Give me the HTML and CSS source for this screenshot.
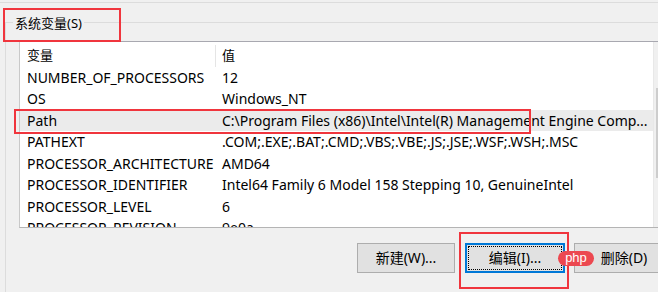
FILE: index.html
```html
<!DOCTYPE html>
<html lang="zh-CN">
<head>
    <meta charset="UTF-8">
    <title>环境变量</title>
    <link rel="stylesheet" href="styles.css">
</head>
<body>
    <div class="shot">
        <div class="prev-edge"></div>
        <div class="group">
            <div class="group-title">系统变量(S)</div>
            <div class="list">
                <div class="rows">
                    <div class="row head"><span class="name">变量</span><span class="value">值</span></div>
                    <div class="row"><span class="name">NUMBER_OF_PROCESSORS</span><span class="value">12</span></div>
                    <div class="row"><span class="name">OS</span><span class="value">Windows_NT</span></div>
                    <div class="row selected"><span class="name">Path</span><span class="value">C:\Program Files (x86)\Intel\Intel(R) Management Engine Comp...</span></div>
                    <div class="row"><span class="name">PATHEXT</span><span class="value">.COM;.EXE;.BAT;.CMD;.VBS;.VBE;.JS;.JSE;.WSF;.WSH;.MSC</span></div>
                    <div class="row"><span class="name">PROCESSOR_ARCHITECTURE</span><span class="value">AMD64</span></div>
                    <div class="row"><span class="name">PROCESSOR_IDENTIFIER</span><span class="value">Intel64 Family 6 Model 158 Stepping 10, GenuineIntel</span></div>
                    <div class="row"><span class="name">PROCESSOR_LEVEL</span><span class="value">6</span></div>
                    <div class="row"><span class="name">PROCESSOR_REVISION</span><span class="value">9e0a</span></div>
                </div>
                <div class="scrollbar"><div class="thumb"></div></div>
            </div>
            <div class="buttons">
                <a class="btn btn-new">新建(W)...</a>
                <a class="btn btn-edit">编辑(I)...</a>
                <a class="btn btn-del">删除(D)</a>
            </div>
        </div>

        <!-- annotations drawn over the screenshot -->
        <div class="mark mark-title"></div>
        <div class="mark mark-path"></div>
        <div class="mark mark-edit"></div>
        <div class="watermark">php</div>
    </div>
</body>
</html>
```

FILE: styles.css
```css
html, body {
    margin: 0;
    height: 100%;
    overflow: hidden;
}
body {
    background-color: #f0f0f0;
    color: #000;
    font-family: "Noto Sans", "Noto Sans CJK SC", sans-serif;
    font-size: 14px;
}
.shot {
    position: relative;
    width: 720px;
    height: 292px;
    padding-top: 2px;
    box-sizing: border-box;
}
.prev-edge {
    border-top: 1px solid #dcdcdc;
}
.group {
    margin: 19px 0 0 5px;
    border-top: 1px solid #dcdcdc;
    border-left: 1px solid #dcdcdc;
    padding-left: 13px;
    height: 300px;
}
.group-title {
    width: fit-content;
    margin: -10px 0 0 -6px;
    padding: 0 2px;
    font-size: 13px;
    line-height: 20px;
    background: #f0f0f0;
}
.list {
    display: flex;
    margin-top: 8px;
    height: 185px;
    background: #fff;
    border: 1px solid #c9c9c9;
    border-top-color: #a8a8b0;
    border-bottom-color: #b4b4b4;
}
.rows {
    width: 633px;
    padding-top: 3px;
    overflow: hidden;
}
.row {
    display: grid;
    grid-template-columns: 195px 1fr;
    height: 21.5px;
    line-height: 21.5px;
    white-space: nowrap;
}
.row .name {
    padding-left: 7px;
}
.row .value {
    padding-left: 7px;
}
.head {
    font-size: 13px;
}
.head .value {
    border-left: 1px solid #e5e5e5;
    padding-left: 6px;
}
.selected {
    background: #ebebeb;
}
.scrollbar {
    width: 17px;
    background: #f0f0f0;
    border-left: 1px solid #e8e8e8;
}
.thumb {
    margin: 46px 0 0 2px;
    height: 90px;
    background: #cdcdcd;
}
.buttons {
    display: flex;
    gap: 10px;
    margin: 15px 0 0 338px;
}
.btn {
    position: relative;
    display: inline-block;
    width: 98px;
    height: 30px;
    line-height: 28px;
    box-sizing: border-box;
    text-align: center;
    background: #e1e1e1;
    border: 1px solid #adadad;
    color: #000;
}
.btn-edit {
    width: 100px;
    border-color: #0078d7;
    box-shadow: inset 0 0 0 1px #0078d7;
}
.btn-edit::after {
    content: "";
    position: absolute;
    inset: 2px;
    border: 1px dotted #000;
}
.btn-del {
    width: 100px;
    margin-left: -1px;
}
.mark {
    position: absolute;
    border: 2px solid #f0353d;
    box-sizing: border-box;
}
.mark-title {
    left: 3px;
    top: 8px;
    width: 118px;
    height: 34px;
}
.mark-path {
    left: 14px;
    top: 109px;
    width: 517px;
    height: 25px;
}
.mark-edit {
    left: 459px;
    top: 232px;
    width: 110px;
    height: 57px;
}
.watermark {
    position: absolute;
    left: 558px;
    top: 251px;
    width: 36px;
    height: 15px;
    line-height: 14px;
    border-radius: 8px;
    background: #ec4850;
    color: #fff;
    font-family: "Liberation Sans", sans-serif;
    font-size: 13px;
    text-align: center;
}
```
